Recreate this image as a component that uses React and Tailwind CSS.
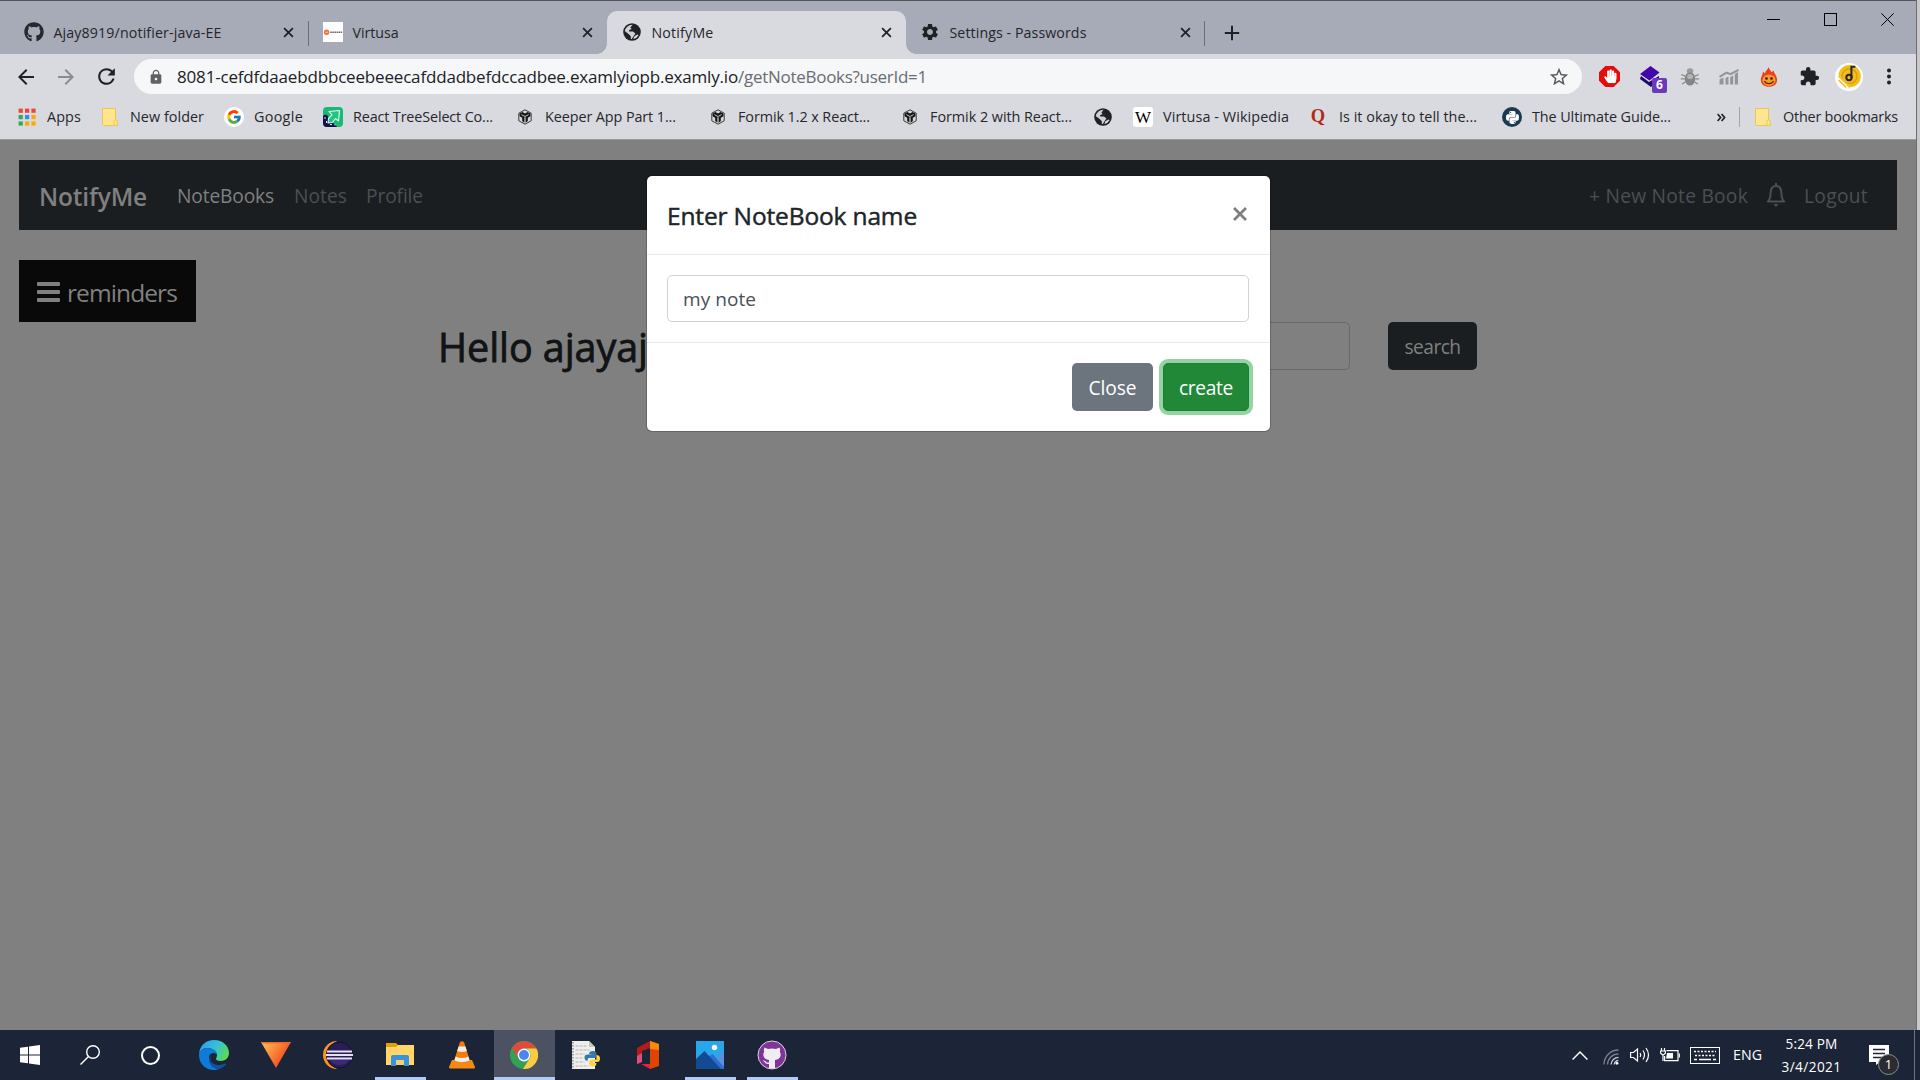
import { useLayoutEffect, useRef, useState } from "react";
import { FaGithub, FaHandPaper, FaPython } from "react-icons/fa";
import { FcGoogle } from "react-icons/fc";
import {
  MdSettings,
  MdExtension,
  MdLock,
  MdStarBorder,
  MdRefresh,
  MdArrowBack,
  MdArrowForward,
} from "react-icons/md";

/* Text that tracks itself in or out so that it fills a given width. */
function Label({ w, className = "", children }) {
  const ref = useRef(null);
  const [spacing, setSpacing] = useState(0);
  useLayoutEffect(() => {
    const el = ref.current;
    el.style.letterSpacing = "0px";
    const natural = el.getBoundingClientRect().width;
    const next = (w - natural) / el.textContent.length;
    el.style.letterSpacing = next + "px";
    setSpacing(next);
  }, [w, children]);
  return (
    <span
      ref={ref}
      className={`inline-block shrink-0 whitespace-pre ${className}`}
      style={{ letterSpacing: spacing }}
    >
      {children}
    </span>
  );
}

/* ---------- browser icons ---------- */

function Cross({ className = "" }) {
  return (
    <svg viewBox="0 0 12 12" className={`shrink-0 ${className}`} fill="none" stroke="currentColor" strokeWidth="1.9">
      <path d="M1.2 1.2 10.8 10.8M10.8 1.2 1.2 10.8" />
    </svg>
  );
}

function GlobeIcon() {
  return (
    <svg viewBox="0 0 20 20" className="size-5 shrink-0">
      <circle cx="10" cy="10" r="8.8" fill="#202124" />
      <path d="M10.6 2.8 8.4 5.6 9.6 7 7 8.2 7.2 9.6 11 9.6 13.4 11.4 12 13.6 9.8 17 8.8 17 8.8 14.2 6.6 12 2.8 9.2A7.4 7.4 0 0 1 10.6 2.8Z" fill="#d9dadf" opacity=".95" />
      <path d="M14.4 4.6 13 6.4 14.6 8 17.2 8.4A7.4 7.4 0 0 0 14.4 4.6Z" fill="#202124" />
      <path d="M3 9.6 6.4 12.8 8.2 14.4 8 17A7.4 7.4 0 0 1 3 9.6Z" fill="#202124" />
      <path d="M12.4 14.2 15.4 12.4 16.6 13A7.4 7.4 0 0 1 11.4 17Z" fill="#d9dadf" />
    </svg>
  );
}

function ExamlyIcon() {
  return (
    <svg viewBox="0 0 20 20" className="size-5 shrink-0">
      <path d="M0 0h20v20H0z" fill="#fff" />
      <circle cx="3.6" cy="10.2" r="2.7" fill="#f0703a" />
      <path d="M2.4 10.2h2.6" stroke="#fbd0b8" strokeWidth=".9" />
      <path d="M7.2 10.2h12" stroke="#6b6b6f" strokeWidth="1.5" strokeDasharray="1.6 .5" />
    </svg>
  );
}

function AppsIcon() {
  const colors = ["#f04438", "#f04438", "#f04438", "#34a853", "#2f8df5", "#f9ab00", "#34a853", "#f9ab00", "#f9ab00"];
  return (
    <svg viewBox="0 0 20 20" className="size-5 shrink-0">
      {colors.map((c, i) => (
        <rect key={i} x={1.6 + (i % 3) * 6.4} y={1.6 + Math.floor(i / 3) * 6.4} width="4.2" height="4.2" fill={c} />
      ))}
    </svg>
  );
}

function FolderIcon() {
  return (
    <svg viewBox="0 0 20 20" className="size-5 shrink-0">
      <path d="M2.5 1.5h13v11.4l1.8.6v5H3.3l-.8-.8Z" fill="#ffe590" stroke="#ecc64f" />
      <path d="M14 18.3v-4.2q0-1.3 1.6-1.3 1.6 0 1.6 1.4v3q0 1.2-1.6 1.2Z" fill="#ffe590" stroke="#ecc64f" strokeWidth=".9" />
    </svg>
  );
}

function GoogleIcon() {
  return (
    <span className="flex size-5 shrink-0 items-center justify-center rounded-full bg-white">
      <FcGoogle className="size-4" />
    </span>
  );
}

function TreeIcon() {
  return (
    <svg viewBox="0 0 20 20" className="size-5 shrink-0">
      <rect width="20" height="20" rx="4" fill="#19b873" />
      <path d="M0 9C3 6.5 5 8 5.5 11 6 15 11 15 14 20H4a4 4 0 0 1-4-4Z" fill="#15104a" />
      <path d="M6 4.5 16.5 3.5 15.5 14 12.5 11.5 9.5 15.5 5 16 5.5 11.5 9 7.8Z" fill="#1fc585" stroke="#dffbee" strokeWidth="1.1" strokeLinejoin="round" />
      <path d="M2 10v2M3.5 14v2M7 17.5h2M12 17v1.5" stroke="#e4e4f4" strokeWidth="1" />
    </svg>
  );
}

function CubeIcon() {
  return (
    <svg viewBox="0 0 20 20" className="size-5 shrink-0">
      <path d="M10 2.800 16.200 6.200v7.600L10 17.200 3.800 13.800V6.200Z" fill="#d5d6da" stroke="#3a3a3c" strokeWidth="1" strokeLinejoin="round" />
      <path d="M4.600 6.600 7.400 5 10 6.400 12.600 5 15.400 6.600 15.400 9.200 12.800 10.800V14L10.600 15.800V10.400L10 10 9.400 10.400V15.800L7.200 14V10.800L4.600 9.200Z" fill="#151515" />
      <path d="M6.400 7.600 10 9.500 13.600 7.600" stroke="#d5d6da" strokeWidth=".9" fill="none" />
    </svg>
  );
}

function WikiIcon() {
  return (
    <span className="flex size-5 shrink-0 items-center justify-center rounded-[3px] bg-white font-['Liberation_Serif'] text-[17px] leading-none text-black">
      W
    </span>
  );
}

function QuoraIcon() {
  return (
    <span className="flex size-5 shrink-0 items-center justify-center pr-[2px] pb-[1px] font-['Liberation_Serif'] text-[18.500px] leading-none font-bold text-[#b02a14]">
      Q
    </span>
  );
}

function RealPythonIcon() {
  return (
    <span className="flex size-5 shrink-0 items-center justify-center rounded-full bg-[#1a3a50]">
      <FaPython className="size-[15px] text-white" />
    </span>
  );
}

/* ---------- tabs ---------- */

function Tab({ icon, title, w, active }) {
  return (
    <div
      className={`relative mt-[11px] flex h-[43px] w-[299px] shrink-0 items-center pb-[1px] pl-[15px] ${
        active ? "rounded-t-[10px] bg-[#d9dadf]" : ""
      }`}
    >
      {active && (
        <>
          <span className="absolute bottom-0 -left-[10px] size-[10px] bg-[radial-gradient(circle_at_0_0,transparent_9.5px,#d9dadf_10px)]" />
          <span className="absolute -right-[10px] bottom-0 size-[10px] bg-[radial-gradient(circle_at_100%_0,transparent_9.5px,#d9dadf_10px)]" />
        </>
      )}
      {icon}
      <Label w={w} className="mt-[2px] ml-[9.500px] text-[14.200px] leading-5 text-[#25262b]">
        {title}
      </Label>
      <Cross className="mt-[1px] mr-[14px] ml-auto size-[11px] text-[#202124]" />
    </div>
  );
}

function TabStrip() {
  return (
    <div className="flex h-[54px] border-t border-[#55555c] bg-[#a7abb7]">
      <div className="-mt-px flex pl-[9px]">
        <Tab icon={<FaGithub className="size-5 shrink-0 text-[#24292e]" />} title="Ajay8919/notifier-java-EE" w={168} />
        <span className="mt-[21px] -mr-px h-[25px] w-px bg-[#6b6e78]" />
        <Tab icon={<ExamlyIcon />} title="Virtusa" w={46} />
        <Tab icon={<GlobeIcon />} title="NotifyMe" w={62} active />
        <Tab icon={<MdSettings className="-ml-[1px] size-5 shrink-0 text-[#202124]" />} title="Settings - Passwords" w={137} />
        <span className="mt-[21px] -ml-px h-[25px] w-px bg-[#6b6e78]" />
        <svg viewBox="0 0 16 16" className="mt-[25px] ml-[19px] size-4 stroke-[#202124]" strokeWidth="2">
          <path d="M8 .8v14.4M.8 8h14.4" />
        </svg>
      </div>
      <div className="mr-[22px] ml-auto flex items-start gap-[44px] pt-[12px]">
        <svg viewBox="0 0 13 13" className="size-[13px]" shapeRendering="crispEdges">
          <path d="M0 6h13v1H0z" />
        </svg>
        <span className="size-[13px] border border-black" />
        <svg viewBox="0 0 13 13" className="size-[13px]" stroke="#000" strokeWidth="1">
          <path d="M.3.3 12.7 12.7M12.7.3.3 12.7" />
        </svg>
      </div>
    </div>
  );
}

/* ---------- toolbar ---------- */

function BlockerIcon() {
  return (
    <svg viewBox="0 0 20 20" className="size-[21px]">
      <path d="M6 0h8l6 6v8l-6 6H6l-6-6V6Z" fill="#e40d0d" />
      <g transform="translate(4.2 3.2) scale(.026)">
        <FaHandPaper size={512} color="#fff" />
      </g>
    </svg>
  );
}

function LayersIcon() {
  return (
    <span className="relative size-[28px]">
      <svg viewBox="0 0 28 28" className="size-[28px]">
        <path d="M2 13 10 19 20 13V17L12 24 1 16Z" fill="#22076e" />
        <path d="M11.5 3 20.5 9.5 10.5 17.5 1 11Z" fill="#4306ad" />
      </svg>
      <span className="absolute top-[15px] left-[13px] flex h-[15px] w-[15px] items-center justify-center rounded-[2px] bg-[#6a3ab8] text-[12px] leading-none font-bold text-white">
        6
      </span>
    </span>
  );
}

function BugIcon() {
  return (
    <svg viewBox="0 0 20 20" className="size-5">
      <path d="M1.2 7.5l4 1.6M.8 11.8h4M2 17l3.4-2M18.800 7.500l-4 1.600M19.200 11.800h-4M18 17l-3.400-2" stroke="#8a8a8c" strokeWidth="1.300" fill="none" />
      <ellipse cx="10" cy="4" rx="3.200" ry="2.800" fill="#9a9a9c" />
      <path d="M10 5.400c3.400 0 5.200 2.600 5.200 6.400S13 18.600 10 18.600 4.800 15.600 4.800 11.800 6.600 5.400 10 5.400Z" fill="#858587" />
      <ellipse cx="10" cy="9.500" rx="3" ry="2.600" fill="#b4b4b6" />
    </svg>
  );
}

function ChartIcon() {
  return (
    <svg viewBox="0 0 20 20" className="size-5" fill="#959597">
      <path d="M.5 12.500 4.500 10.500V17.500H.5ZM6.500 11 9.500 9.500v8h-3ZM11.200 10l3-1.500v9h-3ZM15.800 7 19 5v12.500h-3.200Z" />
      <path d="M.5 9.800 7.500 5.600 11.500 7.200 19.500 2.800" fill="none" stroke="#959597" strokeWidth="2" />
    </svg>
  );
}

function FlameIcon() {
  return (
    <svg viewBox="0 0 20 20" className="size-5">
      <path d="M9.500 0c.6 2.500 2.400 3.300 3 5.200L14.600 3.500c-.2 2.300 3.500 4.600 3.500 9.300 0 4.400-3.400 7-8.100 7s-8.200-2.600-8.200-7C1.800 9.500 4 7.800 4 4.500l2 2C6.300 3.800 8.800 3 9.500 0Z" fill="#e8401c" />
      <ellipse cx="10" cy="13.200" rx="6.500" ry="5.700" fill="#f9992a" />
      <circle cx="7.500" cy="11.500" r="1.300" fill="#3a1b08" />
      <circle cx="12.500" cy="11.500" r="1.300" fill="#3a1b08" />
      <path d="M5.500 14c1.500 3.500 7.500 3.500 9 0" stroke="#5a230a" strokeWidth="1.100" fill="none" />
    </svg>
  );
}

function AvatarIcon() {
  return (
    <svg viewBox="0 0 28 28" className="size-7">
      <circle cx="14" cy="14" r="14" fill="#fff" />
      <circle cx="14.600" cy="13.200" r="11.200" fill="#f5bd18" />
      <circle cx="14.600" cy="13.200" r="7.400" fill="none" stroke="#d99f10" strokeWidth="1.400" />
      <path d="M2.500 11 17 25.500 12 27 2 18Z" fill="#fff" />
      <path d="M3.500 13 15 24.500M3.600 17 11 24.400" stroke="#f5bd18" strokeWidth="1.500" />
      <circle cx="14" cy="14.500" r="2.700" fill="none" stroke="#26272b" strokeWidth="2" />
      <path d="M16.400 15V3.800h4" fill="none" stroke="#26272b" strokeWidth="2" />
    </svg>
  );
}

function Toolbar() {
  return (
    <div className="flex h-[45px] items-center bg-[#d9dadf] pl-[14px] text-[#202124]">
      <MdArrowBack className="size-6 shrink-0" />
      <MdArrowForward className="ml-4 size-6 shrink-0 text-[#8b8c91]" />
      <MdRefresh className="ml-4 size-[25px] shrink-0" />
      <div className="ml-[15px] flex h-[35px] w-[1448px] shrink-0 items-center rounded-full bg-[#f5f7f9] pl-[14px]">
        <MdLock className="size-4 shrink-0 text-[#5f6164]" />
        <Label w={561} className="ml-[13px] text-[17px] leading-6">
          8081-cefdfdaaebdbbceebeeecafddadbefdccadbee.examlyiopb.examly.io
        </Label>
        <Label w={189} className="text-[17px] leading-6 text-[#6a6c70]">
          /getNoteBooks?userId=1
        </Label>
        <MdStarBorder className="mr-[12px] ml-auto size-[22px] shrink-0 text-[#55575b]" />
      </div>
      <div className="flex items-center">
        <div className="flex w-[41px] shrink-0 justify-center pl-[14px]"><BlockerIcon /></div>
        <div className="flex w-[47px] shrink-0 justify-center pl-[13px]"><LayersIcon /></div>
        <div className="flex w-[39px] shrink-0 justify-center"><BugIcon /></div>
        <div className="flex w-[40px] shrink-0 justify-center"><ChartIcon /></div>
        <div className="flex w-[40px] shrink-0 justify-center"><FlameIcon /></div>
        <div className="flex w-[40px] shrink-0 justify-center"><MdExtension className="size-[21px]" /></div>
        <div className="flex w-[39px] shrink-0 justify-center"><AvatarIcon /></div>
        <svg viewBox="0 0 6 20" className="ml-[18px] h-5 w-[6px]" fill="#202124">
          <circle cx="3" cy="3.500" r="2" />
          <circle cx="3" cy="9.500" r="2" />
          <circle cx="3" cy="15.500" r="2" />
        </svg>
      </div>
    </div>
  );
}

/* ---------- bookmarks ---------- */

function Bookmark({ icon, text, w, slot }) {
  return (
    <div className={`flex shrink-0 items-center gap-[10px] ${slot}`}>
      {icon}
      {text && (
        <Label w={w} className="text-[14.400px] leading-5 text-[#26272b]">
          {text}
        </Label>
      )}
    </div>
  );
}

function BookmarksBar() {
  return (
    <div className="flex h-[41px] items-center border-b border-[#98999d] bg-[#d9dadf] pb-[4px] pl-[17px]">
      <Bookmark icon={<AppsIcon />} text="Apps" w={34} slot="w-[83px]" />
      <Bookmark icon={<FolderIcon />} text="New folder" w={74} slot="w-[124px]" />
      <Bookmark icon={<GoogleIcon />} text="Google" w={49} slot="w-[99px]" />
      <Bookmark icon={<TreeIcon />} text="React TreeSelect Co..." w={140} slot="w-[192px]" />
      <Bookmark icon={<CubeIcon />} text="Keeper App Part 1..." w={131} slot="w-[193px]" />
      <Bookmark icon={<CubeIcon />} text="Formik 1.2 x React..." w={132} slot="w-[192px]" />
      <Bookmark icon={<CubeIcon />} text="Formik 2 with React..." w={142} slot="w-[193px]" />
      <Bookmark icon={<GlobeIcon />} slot="w-[40px]" />
      <Bookmark icon={<WikiIcon />} text="Virtusa - Wikipedia" w={126} slot="w-[176px]" />
      <Bookmark icon={<QuoraIcon />} text="Is it okay to tell the..." w={138} slot="w-[193px]" />
      <Bookmark icon={<RealPythonIcon />} text="The Ultimate Guide..." w={139} slot="w-[215px]" />
      <svg viewBox="0 0 9 9" className="size-[9px] shrink-0" fill="none" stroke="#202124" strokeWidth="1.700">
        <path d="M.6 1 3.600 4.500.6 8M4.600 1 7.600 4.500 4.600 8" />
      </svg>
      <span className="ml-[13px] h-5 w-px bg-[#a3a4a9]" />
      <div className="ml-[13px]">
        <Bookmark icon={<FolderIcon />} text="Other bookmarks" w={115} slot="" />
      </div>
    </div>
  );
}

/* ---------- web page ---------- */

function Navbar() {
  return (
    <nav className="flex h-[70px] items-center bg-[#1a1e21] px-5 text-[19.200px] leading-none text-[#4c4f51]">
      <Label w={108} className="pt-[4px] text-[24.500px] font-semibold text-[#808080]">NotifyMe</Label>
      <Label w={97} className="ml-[30px] pt-[2px] text-[#808080]">NoteBooks</Label>
      <Label w={53} className="ml-[20px] pt-[2px]">Notes</Label>
      <Label w={57} className="ml-[19px] pt-[2px]">Profile</Label>
      <div className="ml-auto flex items-center pr-[9px]">
        <Label w={159} className="pt-[2px]">+ New Note Book</Label>
        <svg viewBox="0 0 20 26" className="mx-[18px] h-[26px] w-5" fill="none" stroke="currentColor" strokeWidth="2">
          <path d="M10 1v3M1.800 19.500h16.400C15 17 15.800 13 15.300 9.800 14.900 6 13 4 10 4S5.100 6 4.700 9.800C4.200 13 5 17 1.800 19.500Z" strokeLinejoin="round" />
          <path d="M7.400 22h5.200L10 25Z" fill="currentColor" stroke="none" />
        </svg>
        <Label w={64} className="pt-[2px]">Logout</Label>
      </div>
    </nav>
  );
}

function Modal() {
  return (
    <div className="absolute top-[35px] left-[646px] w-[625px] rounded-[6px] border border-black/20 bg-white bg-clip-padding">
      <div className="flex h-[79px] items-center border-b border-[#e9ecef] pr-[23px] pl-5">
        <Label w={250} className="pt-[3px] text-[24.500px] leading-none text-[#212529] [-webkit-text-stroke:0.45px_#212529]">
          Enter NoteBook name
        </Label>
        <svg viewBox="0 0 14 14" className="mb-[2px] ml-auto size-[14px]" stroke="#7f7f7f" strokeWidth="2.800">
          <path d="M1 1 13 13M13 1 1 13" />
        </svg>
      </div>
      <div className="px-[20px] pt-5 pb-5">
        <div className="flex h-[47px] w-[582px] items-center rounded-[5px] border border-[#ced4da] pl-[15px]">
          <Label w={73} className="pt-[1px] text-[19px] leading-none text-[#495057]">my note</Label>
        </div>
      </div>
      <div className="flex h-[89px] items-center justify-end gap-[10px] border-t border-[#e9ecef] pr-[21px] text-[19.200px] leading-none text-white">
        <div className="flex h-[48px] w-[81px] items-center justify-center rounded-[5px] bg-[#6c757d]">
          <Label w={48} className="pt-[2px]">Close</Label>
        </div>
        <div className="flex h-[48px] w-[86px] items-center justify-center rounded-[5px] border border-[#1e7e34] bg-[#218838] shadow-[0_0_0_4px_#94d3a2]">
          <Label w={54} className="pt-[2px]">create</Label>
        </div>
      </div>
    </div>
  );
}

function WebPage() {
  return (
    <main className="relative h-[890px] bg-[#808080] px-[19px] pt-5">
      <Navbar />
      <div className="mt-[30px] flex h-[62px] w-[177px] items-center bg-[#090909] pl-[18px]">
        <svg viewBox="0 0 23 20" className="mt-[2px] h-5 w-[23px] shrink-0" fill="#808080">
          <rect width="23" height="4" rx="1" />
          <rect y="8" width="23" height="4" rx="1" />
          <rect y="16" width="23" height="4" rx="1" />
        </svg>
        <Label w={110} className="ml-[7px] pt-[4px] text-[24.500px] leading-none text-[#808080]">reminders</Label>
      </div>
      <div className="flex pl-[418px]">
        <Label w={210} className="ml-[1px] pt-[6px] text-[39.500px] leading-none text-[#111315] [-webkit-text-stroke:0.8px_#111315]">Hello ajayaj</Label>
        <span className="ml-[302px] h-[48px] w-[400px] rounded-[5px] border border-[#676a6d]" />
        <div className="ml-[38px] flex h-[48px] w-[89px] items-center justify-center rounded-[5px] bg-[#1a1e21] text-[19.200px] leading-none text-[#808080]">
          <Label w={56} className="pt-[2px]">search</Label>
        </div>
      </div>
      <Modal />
    </main>
  );
}

/* ---------- taskbar ---------- */

const edgeIcon = (
  <svg viewBox="0 0 30 30" className="size-[30px]">
    <defs>
      <linearGradient id="edgeTop" x1="0" x2="1" y1=".3" y2=".7">
        <stop offset="0" stopColor="#2f9fe8" />
        <stop offset=".5" stopColor="#35c1d6" />
        <stop offset="1" stopColor="#5fdc48" />
      </linearGradient>
    </defs>
    <path d="M0 14C1 5 7 0 15 0c9 0 15 6 15 13 0 5-4 8-8 8-3 0-5-1-5-2 0-1 1-2 1-4C18 11 13 8 8 8 4 8 1 11 0 14Z" fill="url(#edgeTop)" />
    <path d="M0 15C0 11 4 8 8 8c6 0 10 3 10 7-1-3-8-3-8 3 0 5 4 11 10 11-2 .8-3 1-5 1C7 30 0 24 0 15Z" fill="#0f7bd8" />
    <path d="M12 16c-2 3 0 9 8 9 4 0 6-2 7-1.500C28 24 24 28 20 29c-6 0-10-5-10-10 0-1 1-2 2-3Z" fill="#1450a0" />
  </svg>
);

const triangleIcon = (
  <svg viewBox="0 0 30 28" className="h-[28px] w-[30px]">
    <defs>
      <linearGradient id="tri" x1="0" x2="1" y1="0" y2=".6">
        <stop offset="0" stopColor="#ffc25e" />
        <stop offset=".45" stopColor="#fd8a3c" />
        <stop offset="1" stopColor="#ee3a1a" />
      </linearGradient>
    </defs>
    <path d="M0 1h30L15 27Z" fill="url(#tri)" />
    <path d="M0 1h30l-2 1.500H2Z" fill="#f06a26" />
  </svg>
);

const eclipseIcon = (
  <svg viewBox="0 0 30 30" className="size-[30px]">
    <path d="M14 1A14 14 0 0 0 14 29 17 17 0 0 1 14 1Z" fill="#f7941e" />
    <circle cx="16.500" cy="15" r="13.300" fill="#2a1d55" />
    <circle cx="16.500" cy="15" r="13" fill="none" stroke="#161033" />
    <path d="M7 20h19c-2 4-6 5-9.500 5S9 23.500 7 20Z" fill="#3b2a7c" />
    <path d="M4 10.500h25v2H4zM3 14h27v2H3zM4 17.500h25v2H4z" fill="#e4e0f2" />
  </svg>
);

const explorerIcon = (
  <svg viewBox="0 0 28 24" className="h-6 w-7">
    <path d="M0 0h10l3 3-1 2H0Z" fill="#e0a008" />
    <path d="M0 4h10l2-2h16v20H0Z" fill="#ffd667" />
    <path d="M5 14q0-2 2-2h14q2 0 2 2v9h-5v-6h-8v6H5Z" fill="#3b92dc" />
    <path d="M10 17h8v5h-8z" fill="#f5cf6c" />
  </svg>
);

const vlcIcon = (
  <svg viewBox="0 0 26 28" className="h-[28px] w-[26px]">
    <path d="M3 19h20l3 7q0 1.500-1 1.500H1Q0 27.500 0 26Z" fill="#f58a12" />
    <path d="M11 1q2-1.500 4 0l6 19q-8 4-16 0Z" fill="#f47b0a" />
    <path d="m9.600 5.500 h6.800l1.500 4.500q-4.900 2-9.800 0ZM6.600 15.500q6.400 3 12.800 0l1.200 4q-7.600 3.600-15.200 0Z" fill="#ececec" />
  </svg>
);

const chromeIcon = (
  <svg viewBox="0 0 28 28" className="size-7">
    <circle cx="14" cy="14" r="14" fill="#34a055" />
    <path d="M2 7A14 14 0 0 1 26.200 7.500H14A6.500 6.500 0 0 0 8.300 17.200Z" fill="#e04a3b" />
    <path d="M26.400 7.500A14 14 0 0 1 13 28L19.600 17.500A6.500 6.500 0 0 0 14 7.500Z" fill="#fdcb3f" />
    <circle cx="14" cy="14" r="6.400" fill="#fff" />
    <circle cx="14" cy="14" r="5" fill="#4a86ee" />
  </svg>
);

const pythonFileIcon = (
  <svg viewBox="0 0 28 28" className="size-7">
    <path d="M0 0h17l6 6v22H0Z" fill="#eeeeec" />
    <path d="M17 0v6h6Z" fill="#c6c6c4" />
    <path d="M3.500 5h11M3.500 9h14M3.500 13h9M3.500 17h8M3.500 21h9M3.500 25h13" stroke="#b4b4b4" strokeWidth="1.200" strokeDasharray="3 1" />
    <path d="M1 1v26" stroke="#777" strokeWidth="1.200" strokeDasharray="1.500 1.500" />
    <path d="M17 13q0-3 4-3 3.500 0 3.500 3v4H17q-1.500 0-1.500 3-3-.5-3-3.500t3-3h5.500" fill="#3a76a8" />
    <path d="M24.500 14q3.500 0 3.500 3.500T25 21h-4v1h3.500q0 3.500-3.500 3.500T17 22.500q0-4 3-4h4.500Z" fill="#ffd340" />
  </svg>
);

const officeIcon = (
  <svg viewBox="0 0 24 28" className="h-[28px] w-6">
    <path d="M1 7 14 0v7L6 10v11l-5 2Z" fill="#b51a1c" />
    <path d="M1 15 6 12v9l-5 2Z" fill="#d9507a" />
    <path d="m14 0 9 3v22l-9 3Z" fill="#e04403" />
    <path d="m14 0 9 3v6l-9-1Z" fill="#f58a0a" />
    <path d="M5 23h9v5Z" fill="#e3243b" />
  </svg>
);

const photosIcon = (
  <svg viewBox="0 0 28 28" className="size-7">
    <path d="M0 0h28v28H0z" fill="#28a8ea" />
    <path d="M28 8v20H14Z" fill="#5b8fe0" />
    <path d="m13 15 3.500-2L28 26v2H13Z" fill="#2f6fd0" />
    <path d="M0 18 8.500 10 25 28H0Z" fill="#124a94" />
    <circle cx="18.500" cy="6.500" r="2.700" fill="#f4f8fb" />
  </svg>
);

const githubIcon = (
  <svg viewBox="0 0 30 30" className="size-[30px]">
    <circle cx="15" cy="15" r="14" fill="#7e3596" stroke="#d9d3df" />
    <path d="M7.500 7.500 11 9q4-.8 8 0l3.500-1.500q1 2 .3 4 1.200 2 .7 4.500-1 3.500-5.500 4v8.500h-6V24q-3.500.5-4.500-2l-2-1.500q3-.5 4 2h2.500V20Q7.500 19.500 6.500 16q-.5-2.500.7-4.500-.7-2 .3-4Z" fill="#f0edf2" />
  </svg>
);

function TaskButton({ icon, running, active, className = "w-[62px]", bar = "w-[51px]" }) {
  return (
    <div className={`flex h-[50px] shrink-0 justify-center ${className}`}>
      <div
        className={`flex h-[50px] flex-col items-center ${active ? "w-[61px] bg-[#4c5262]" : bar}`}
      >
        <div className="flex h-[47px] items-center pt-[3px]">{icon}</div>
        {(running || active) && <span className="h-[3px] w-full bg-[#b0cbf8]" />}
      </div>
    </div>
  );
}

function Taskbar() {
  return (
    <footer className="flex h-[50px] bg-[#1c2437] text-white">
      <TaskButton
        className="w-[60px]"
        icon={
          <svg viewBox="0 0 20 20" className="size-5" fill="#fff">
            <path d="M0 2.800 8 1.700v7.800H0ZM9 1.500 20 0v9.500H9ZM0 10.500h8v7.800L0 17.200ZM9 10.500h11V20L9 18.500Z" />
          </svg>
        }
      />
      <TaskButton
        className="w-[60px]"
        icon={
          <svg viewBox="0 0 20 20" className="size-5" fill="none" stroke="#fff" strokeWidth="1.400">
            <circle cx="13" cy="7" r="6.300" />
            <path d="M8.500 11.500.5 19.500" />
          </svg>
        }
      />
      <TaskButton
        className="w-[60px]"
        icon={<span className="size-[19px] rounded-full border-[2.500px] border-white" />}
      />
      <div className="flex pl-[3px]">
        <TaskButton icon={edgeIcon} />
        <TaskButton icon={triangleIcon} />
        <TaskButton icon={eclipseIcon} />
        <TaskButton icon={explorerIcon} running />
        <TaskButton icon={vlcIcon} />
        <TaskButton icon={chromeIcon} active />
        <TaskButton icon={pythonFileIcon} />
        <TaskButton icon={officeIcon} />
        <TaskButton icon={photosIcon} running />
        <TaskButton icon={githubIcon} running />
      </div>
      <div className="ml-auto flex items-center">
        <svg viewBox="0 0 16 9" className="mr-[15px] h-[9px] w-4" fill="none" stroke="#fff" strokeWidth="1.400">
          <path d="M.6 8.400 8 1 15.400 8.400" />
        </svg>
        <svg viewBox="0 0 16 16" className="mt-1 mr-[11px] size-4" fill="none" strokeWidth="1.300">
          <path d="M1 15.500A14.500 14.500 0 0 1 15.500 1M4.500 15.500A11 11 0 0 1 15.500 4.800" stroke="#7c8291" />
          <path d="M8 15.500A7.500 7.500 0 0 1 15.500 8.400M11.300 15.500a4 4 0 0 1 4-4" stroke="#c9ccd4" />
          <circle cx="14" cy="14.300" r="1.400" fill="#fff" />
        </svg>
        <svg viewBox="0 0 20 18" className="mr-[10px] h-[18px] w-5" fill="none" stroke="#fff" strokeWidth="1.200">
          <path d="M.6 6.500h2.800L7.500 3v12L3.400 11.500H.6Z" />
          <path d="M10 7q1.400 2 0 4M13 4.500q3 4.500 0 9M16 2q5 7 0 14" />
        </svg>
        <svg viewBox="0 0 20 14" className="mr-[10px] h-[14px] w-5" fill="none" stroke="#fff" strokeWidth="1.200">
          <path d="M6.500 2.600H18v10H4.600V8" />
          <path d="M19.300 5.500v4M1.500 0v3M4.500 0v3M.6 3h4.800v2.200L3 7.200.6 5.200ZM3 7v6" />
          <path d="M7 5h6v5.500H6Z" fill="#fff" stroke="none" />
        </svg>
        <svg viewBox="0 0 30 17" className="h-[17px] w-[30px]" fill="none" stroke="#fff">
          <rect x=".5" y=".5" width="29" height="16" />
          <path d="M4 4.500h22M5 8.500h21" strokeDasharray="2 1.500" strokeWidth="1.300" />
          <path d="M4 12.500h3M9 12.500h12M23 12.500h3" strokeWidth="1.300" />
        </svg>
        <Label w={29} className="ml-[13px] pt-[1px] text-[14.200px] leading-none">ENG</Label>
        <div className="flex w-[99px] flex-col items-center text-[13.600px] leading-[23px]">
          <Label w={52}>5:24 PM</Label>
          <Label w={60}>3/4/2021</Label>
        </div>
        <div className="relative ml-[8px] size-5">
          <svg viewBox="0 0 20 20" className="size-5">
            <path d="M0 0h20v17H11L7 20V17H0Z" fill="#fff" />
            <path d="M4 4.500h12M4 8.500h12M4 12.500h9" stroke="#1c2437" strokeWidth="1.300" />
          </svg>
          <span className="absolute top-[9px] left-[9px] flex size-[21px] items-center justify-center rounded-full border border-[#8b8d92] bg-[#2b2c30] text-[13px] leading-none">
            1
          </span>
        </div>
        <span className="ml-[25px] h-[50px] w-px bg-[#6d7382]" />
        <span className="w-[5px]" />
      </div>
    </footer>
  );
}

export default function App() {
  return (
    <div className="h-[1080px] w-[1920px] overflow-hidden font-['Open_Sans','Noto_Sans',sans-serif]">
      <div className="flex h-[1030px] bg-[#c9c9cb]">
        <div className="flex w-[1917px] flex-col border-r border-[#6c6c70]">
          <TabStrip />
          <Toolbar />
          <BookmarksBar />
          <WebPage />
        </div>
      </div>
      <Taskbar />
    </div>
  );
}
